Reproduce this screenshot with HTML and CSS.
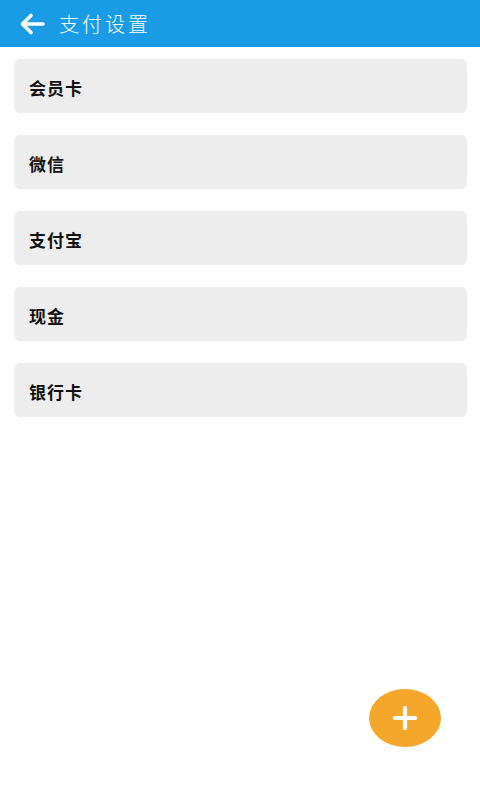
FILE: index.html
```html
<!DOCTYPE html>
<html lang="zh">
<head>
<meta charset="utf-8">
<title>支付设置</title>
<link rel="stylesheet" href="styles.css">
</head>
<body>
<header class="bar">
  <svg class="back" width="26" height="22" viewBox="0 0 26 22">
    <path d="M24 11H4M12 2.5L3.5 11L12 19.5" fill="none" stroke="#fff" stroke-width="3.6" stroke-linecap="round" stroke-linejoin="round"/>
  </svg>
  <span class="title">支付设置</span>
</header>
<main class="list">
  <div class="item">会员卡</div>
  <div class="item">微信</div>
  <div class="item">支付宝</div>
  <div class="item">现金</div>
  <div class="item">银行卡</div>
</main>
<button class="fab" aria-label="add">
  <svg width="24" height="24" viewBox="0 0 24 24"><path d="M12 2V22M2 12H22" stroke="#fff" stroke-width="4.2" stroke-linecap="round"/></svg>
</button>
</body>
</html>
```
FILE: styles.css
```css
html, body { margin: 0; padding: 0; }
body {
  width: 480px;
  height: 800px;
  background: #fff;
  font-family: "Noto Sans CJK SC", "Noto Sans", sans-serif;
  position: relative;
  overflow: hidden;
}
.bar {
  height: 47px;
  background: #1a9be6;
  display: flex;
  align-items: center;
  padding-left: 19px;
  box-sizing: border-box;
}
.back { margin-right: 14px; }
.title {
  color: #fff;
  font-size: 20px;
  font-weight: 300;
  letter-spacing: 3px;
  line-height: 1;
}
.list {
  display: flex;
  flex-direction: column;
  gap: 22px;
  padding: 12px 13px 0 14px;
}
.item {
  height: 54px;
  box-sizing: border-box;
  background: #ededed;
  border-radius: 6px;
  display: flex;
  align-items: center;
  padding: 2px 0 0 15px;
  font-size: 17px;
  font-weight: bold;
  letter-spacing: 1px;
  color: #111;
}
.fab {
  position: absolute;
  left: 369px;
  top: 689px;
  width: 72px;
  height: 58px;
  border-radius: 50%;
  border: none;
  background: #f4a72a;
  display: flex;
  align-items: center;
  justify-content: center;
  padding: 0;
}
```
